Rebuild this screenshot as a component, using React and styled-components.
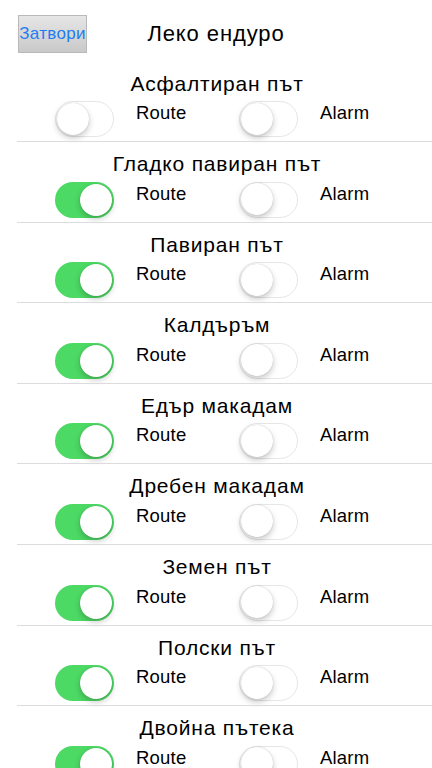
import React from "react";
import styled, { createGlobalStyle } from "styled-components";

const Global = createGlobalStyle`
  html, body { margin: 0; padding: 0; background: #fff; overflow: hidden; }
  body { font-family: "Liberation Sans", Arial, sans-serif; color: #000; }
`;

const Page = styled.div`
  width: 432px;
  height: 768px;
  overflow: hidden;
  background: #fff;
`;

const Header = styled.div`
  height: 61.5px;
  display: grid;
  grid-template-columns: 1fr auto 1fr;
  align-items: start;
  box-sizing: border-box;
  padding-top: 15px;
`;

const CloseButton = styled.button`
  justify-self: start;
  margin-left: 18px;
  width: 69px;
  height: 38px;
  padding: 0;
  border: 1px solid #b9b9b9;
  background: linear-gradient(#e6e6e6, #c9c9c9);
  color: #1d7cf2;
  font-family: "Liberation Sans", Arial, sans-serif;
  font-size: 17px;
  letter-spacing: 0.3px;
  white-space: nowrap;
`;

const Title = styled.div`
  font-size: 22px;
  line-height: 38px;
  letter-spacing: 0.9px;
`;

const Row = styled.div`
  height: 80.6px;
  box-sizing: border-box;
  position: relative;
  display: flex;
  flex-direction: column;
  align-items: stretch;
  &::after {
    content: "";
    position: absolute;
    left: 17px;
    right: 0;
    bottom: 0;
    height: 1px;
    background: #dcdcdf;
  }
`;

const RowTitle = styled.div`
  text-align: center;
  font-size: 21px;
  line-height: 24px;
  letter-spacing: 0.8px;
  margin-top: 10px;
  padding-left: 2px;
`;

const Controls = styled.div`
  display: grid;
  grid-template-columns: 184px 184px;
  padding-left: 55px;
  margin-top: 5.5px;
`;

const Control = styled.div`
  display: flex;
  align-items: flex-start;
  gap: 22px;
`;

const Track = styled.div`
  width: 59px;
  height: 36px;
  border-radius: 18px;
  box-sizing: border-box;
  position: relative;
  flex: none;
  background: ${(p) => (p.$on ? "#4cd964" : "#fff")};
  border: ${(p) => (p.$on ? "none" : "1.5px solid #e6e6e6")};
`;

const Knob = styled.div`
  position: absolute;
  top: ${(p) => (p.$on ? "2px" : "0.5px")};
  left: ${(p) => (p.$on ? "25px" : "0.5px")};
  width: 32px;
  height: 32px;
  border-radius: 50%;
  background: #fff;
  box-shadow: 0 3px 6px rgba(0, 0, 0, 0.22), 0 0 1px rgba(0, 0, 0, 0.25);
`;

const Label = styled.span`
  font-size: 18.5px;
  line-height: 24px;
  letter-spacing: 0.2px;
`;

function Switch({ on }) {
  return (
    <Track $on={on}>
      <Knob $on={on} />
    </Track>
  );
}

const rows = [
  { name: "Асфалтиран път", route: false },
  { name: "Гладко павиран път", route: true },
  { name: "Павиран път", route: true },
  { name: "Калдъръм", route: true },
  { name: "Едър макадам", route: true },
  { name: "Дребен макадам", route: true },
  { name: "Земен път", route: true },
  { name: "Полски път", route: true },
  { name: "Двойна пътека", route: true },
];

export default function App() {
  return (
    <Page>
      <Global />
      <Header>
        <CloseButton>Затвори</CloseButton>
        <Title>Леко ендуро</Title>
        <div />
      </Header>
      {rows.map((r) => (
        <Row key={r.name}>
          <RowTitle>{r.name}</RowTitle>
          <Controls>
            <Control>
              <Switch on={r.route} />
              <Label>Route</Label>
            </Control>
            <Control>
              <Switch on={false} />
              <Label>Alarm</Label>
            </Control>
          </Controls>
        </Row>
      ))}
    </Page>
  );
}
